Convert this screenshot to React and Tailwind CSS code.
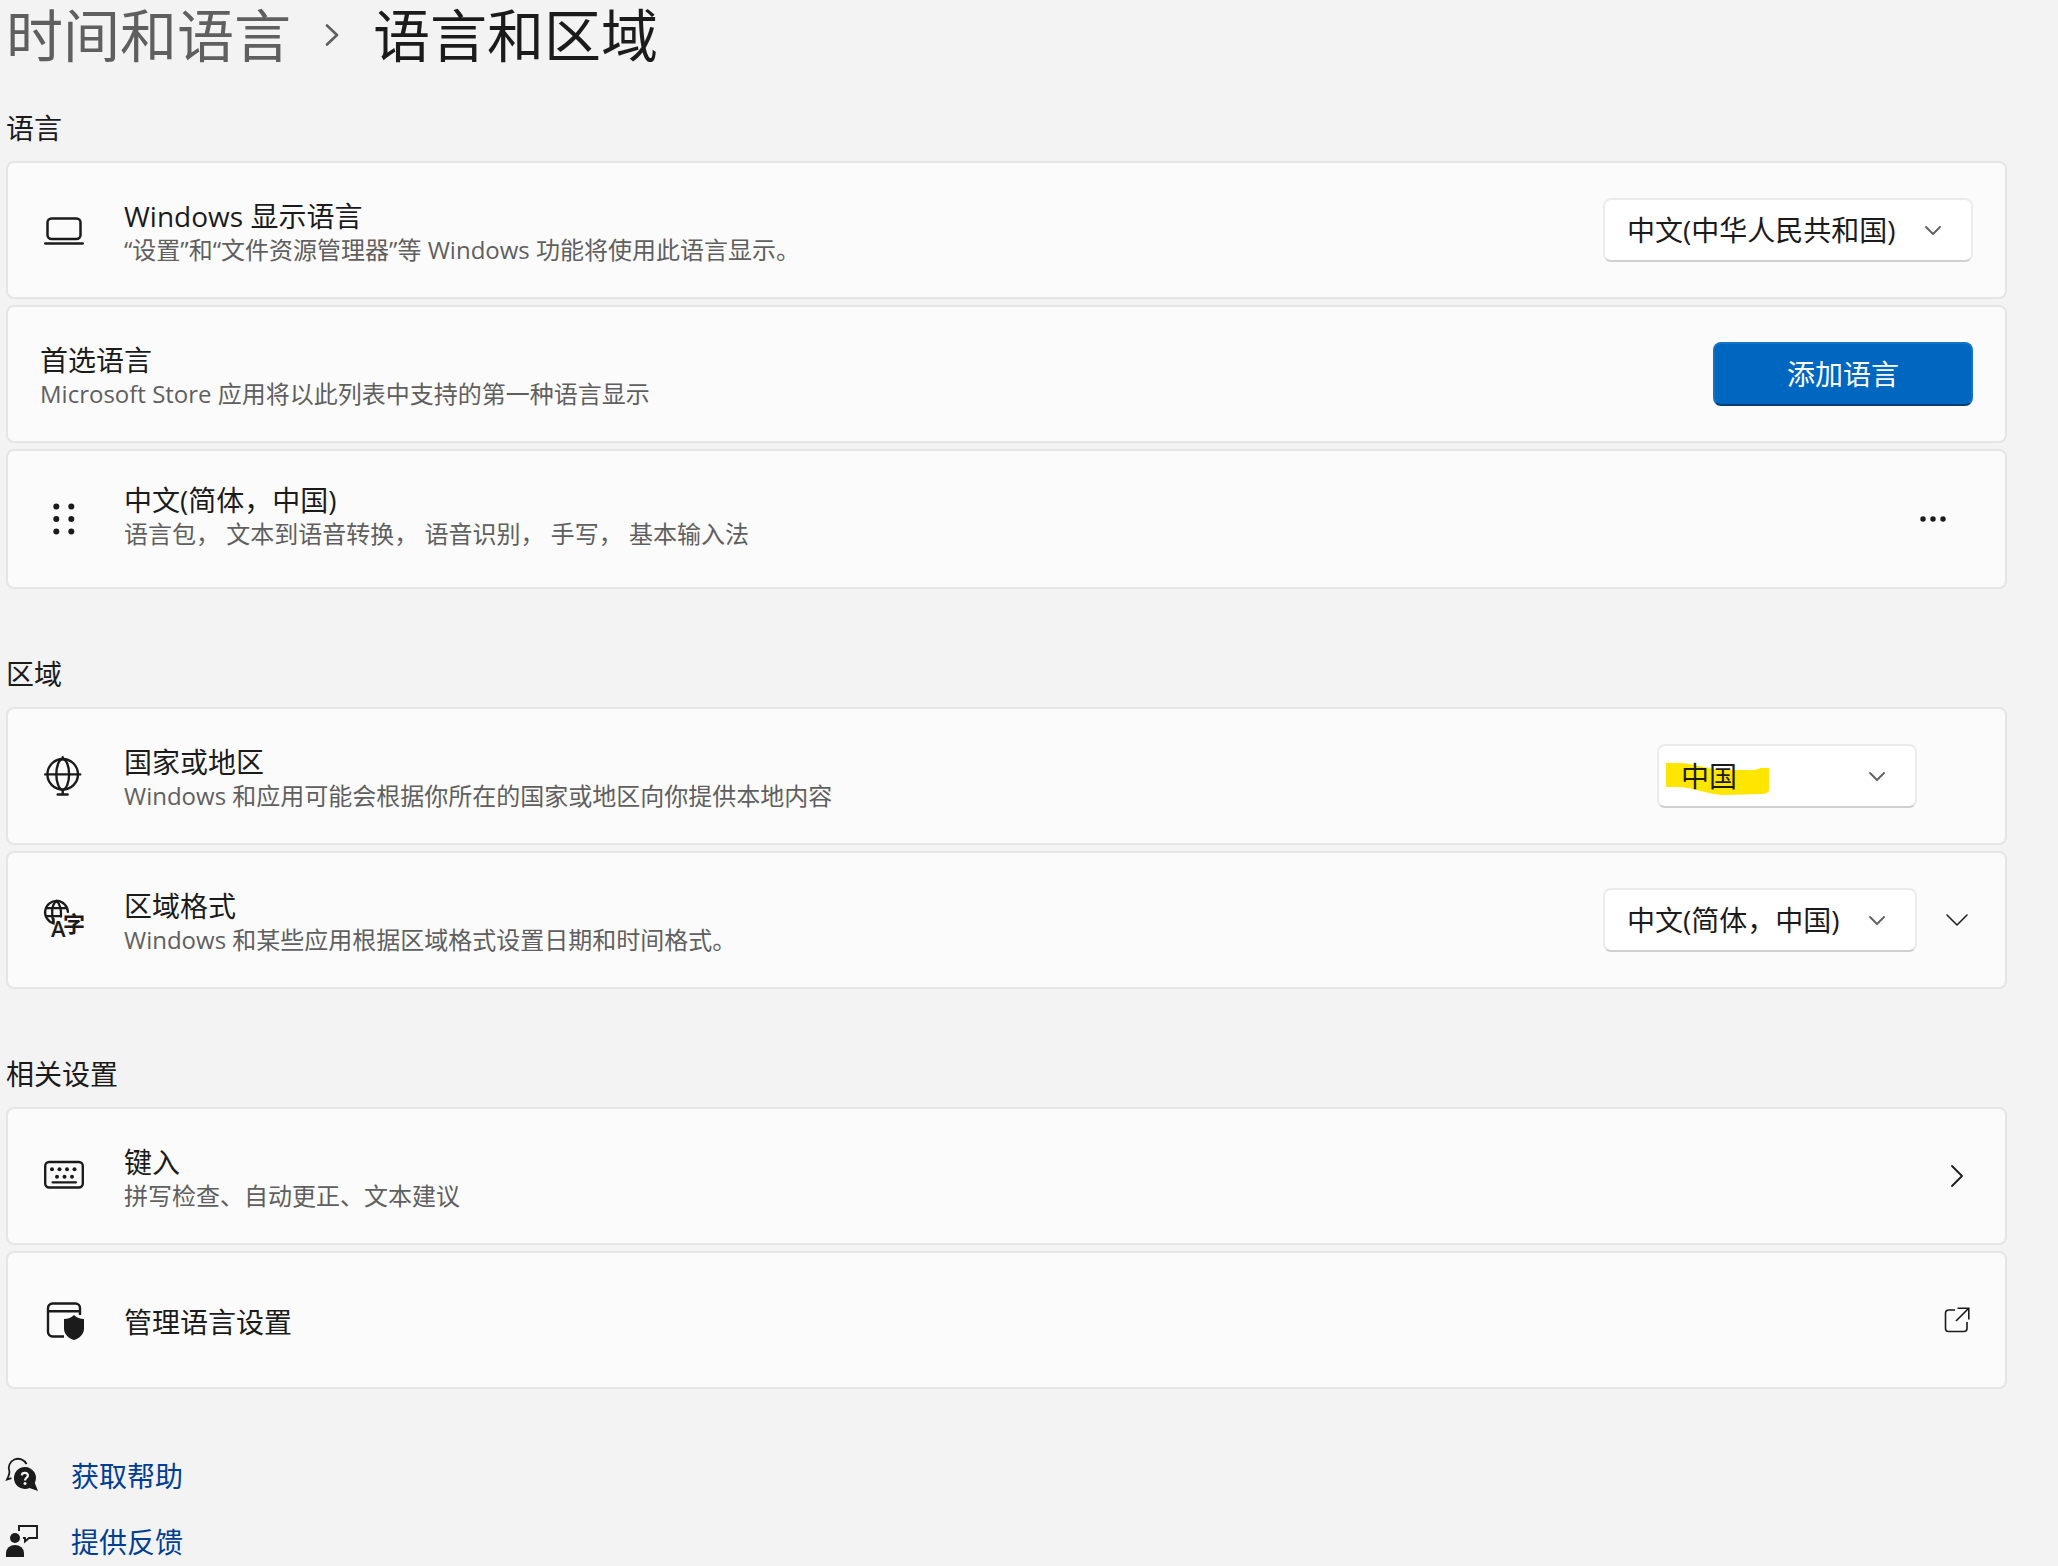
import { useState } from 'react';

function ChevronDown({ className }) {
  return (
    <svg viewBox="0 0 16 9" fill="none" stroke="currentColor" strokeLinecap="round" strokeLinejoin="round" className={className} aria-hidden="true">
      <path d="M1 1l7 7 7-7" strokeWidth="1.8" />
    </svg>
  );
}

function LaptopIcon() {
  return (
    <svg viewBox="0 0 40 40" className="size-10" fill="none" stroke="currentColor" strokeWidth="2.5" strokeLinecap="round" aria-hidden="true">
      <rect x="3.5" y="8.5" width="33" height="20.5" rx="4" />
      <path d="M1.3 33.6h37.4" />
    </svg>
  );
}

function DragIcon() {
  return (
    <svg viewBox="0 0 40 40" className="size-10" fill="currentColor" aria-hidden="true">
      {[7.5, 20, 32.5].map((y) => (
        <g key={y}>
          <circle cx="12.3" cy={y} r="3" />
          <circle cx="27.3" cy={y} r="3" />
        </g>
      ))}
    </svg>
  );
}

function GlobeIcon() {
  return (
    <svg viewBox="0 0 40 40" className="size-10" fill="none" stroke="currentColor" strokeWidth="2.4" strokeLinecap="round" aria-hidden="true">
      <circle cx="18.7" cy="18.3" r="15.3" />
      <ellipse cx="18.7" cy="18.3" rx="6.4" ry="15.3" />
      <path d="M1.2 18.4h35M18.7 1.2v2M18.7 34v4.5M13.7 38.5h10" />
    </svg>
  );
}

function LocaleIcon() {
  return (
    <svg viewBox="0 0 40 40" className="size-10 overflow-visible" aria-hidden="true">
      <g fill="none" stroke="currentColor" strokeWidth="2.3" strokeLinecap="round">
        <path d="M23.9 12A11.4 11.4 0 1 0 9.5 23.3V19" />
        <path d="M12.5 1C7 4.5 7.5 16 9.5 22M12.5 1c3.5 3 5 8 4.5 15.5M2.5 8.2h20M2.5 16.2h14.5" />
      </g>
      <text x="7" y="37" fontSize="22" fontWeight="600" fill="currentColor">A</text>
      <text x="19" y="32" fontSize="22" fontWeight="600" fill="currentColor">字</text>
    </svg>
  );
}

function KeyboardIcon() {
  return (
    <svg viewBox="0 0 40 40" className="size-10" aria-hidden="true">
      <rect x="1.2" y="6" width="37.6" height="25.5" rx="4" fill="none" stroke="currentColor" strokeWidth="2.4" />
      <g fill="currentColor">
        {[8, 15.5, 23, 30.5].map((x) => <circle key={x} cx={x} cy="13.2" r="2" />)}
        {[13, 20.5, 28].map((x) => <circle key={x} cx={x} cy="20.7" r="2" />)}
      </g>
      <path d="M8.5 26.3h23.5" stroke="currentColor" strokeWidth="2.2" strokeLinecap="round" />
    </svg>
  );
}

function WindowShieldIcon() {
  return (
    <svg viewBox="0 0 40 40" className="size-10" aria-hidden="true">
      <path d="M36 15V8a4.5 4.5 0 0 0-4.5-4.5h-23A4.5 4.5 0 0 0 4 8v24a4.5 4.5 0 0 0 4.5 4.5H20M4 11.3h32" fill="none" stroke="currentColor" strokeWidth="2.4" />
      <path d="M30 15c2.5 2.5 6 4 10 4v9.5c0 5.5-4 9.5-10 11.5-6-2-10-6-10-11.5V19c4 0 7.5-1.5 10-4z" fill="currentColor" />
    </svg>
  );
}

function HelpIcon() {
  return (
    <svg viewBox="0 0 32 32" className="size-8 overflow-visible" aria-hidden="true">
      <path d="M20.5 5.2A9.3 9.3 0 0 0 3.4 12.5c.2 2.3-.9 5-2.4 8l4.5-1.3" fill="none" stroke="currentColor" strokeWidth="1.8" />
      <path d="M19 8a11 11 0 0 1 9.8 16L32 32l-8.5-3A11 11 0 1 1 19 8z" fill="currentColor" />
      <path d="M15.8 16.3c.3-3.4 6.4-3.2 6.100.3-.2 2.100-2.900 2.300-2.900 4.900" fill="none" stroke="#f3f3f3" strokeWidth="2.2" />
      <circle cx="19" cy="24.5" r="1.5" fill="#f3f3f3" />
    </svg>
  );
}

function FeedbackIcon() {
  return (
    <svg viewBox="0 0 32 32" className="size-8" fill="currentColor" aria-hidden="true">
      <path d="M13 6V1h18v12h-8l-4 3.5V13h-2" fill="none" stroke="currentColor" strokeWidth="1.9" />
      <circle cx="9" cy="13" r="5" />
      <path d="M0 32v-4a9 8 0 0 1 18 0v4z" />
    </svg>
  );
}

function Card({ icon, title, description, htmlFor, children, tall }) {
  const Title = htmlFor ? 'label' : 'h3';
  return (
    <div className={`flex items-center rounded-lg border-2 border-[#e5e5e5] bg-[#fbfbfb] px-8 ${tall ? 'h-[140px]' : 'h-[138px]'}`}>
      {icon && <div className="mr-9 flex w-12 shrink-0 justify-center">{icon}</div>}
      <div className={`min-w-0 flex-1 ${tall ? 'pb-1.5' : 'pt-1'}`}>
        <Title htmlFor={htmlFor} className="block text-[28px] leading-9">{title}</Title>
        {description && <p className="text-2xl leading-8 text-[#5f5f5f]">{description}</p>}
      </div>
      {children}
    </div>
  );
}

function Select({ id, options, marked }) {
  const [value, setValue] = useState(options[0]);
  return (
    <div className="relative flex h-16 min-w-[260px] rounded-lg bg-white">
      {marked && (
        <svg viewBox="0 0 103 32" className="absolute top-[19px] left-[9px] h-8 w-[103px]" aria-hidden="true">
          <path d="M0 0h15c15 1 25 6 43 7h28c5 0 7-2 10-2h7v23c-1 2-4 3-7 3-12 0-25 1-39 1C40 31 30 25 12 24H0z" fill="#ffe600" />
        </svg>
      )}
      <select
        id={id}
        value={value}
        onChange={(e) => setValue(e.target.value)}
        className="relative w-full appearance-none rounded-lg border-2 border-[#ebebeb] border-b-[#d0d0d0] bg-transparent pr-[75px] pl-[22px] text-[28px]"
      >
        {options.map((option) => (
          <option key={option}>{option}</option>
        ))}
      </select>
      <ChevronDown className="pointer-events-none absolute top-7 right-8 h-[9px] w-4 text-[#5f5f5f]" />
    </div>
  );
}

function Section({ title, children }) {
  return (
    <section>
      <h2 className="mb-[13px] text-[28px] leading-10">{title}</h2>
      <div className="flex flex-col gap-1.5">{children}</div>
    </section>
  );
}

export default function App() {
  return (
    <div lang="zh-CN" className="min-h-screen bg-[#f3f3f3] pr-[51px] pl-1.5 font-['Open_Sans','Noto_Sans_CJK_SC',sans-serif] text-[#1b1b1b]">
      <nav className="flex items-center gap-[34px] text-[57px] leading-[70px]">
        <a href="#time" className="text-[#5f5f5f]">时间和语言</a>
        <svg viewBox="0 0 14 22" className="h-[22px] w-3.5 text-[#5f5f5f]" fill="none" stroke="currentColor" strokeWidth="2.6" strokeLinecap="round" strokeLinejoin="round" aria-hidden="true">
          <path d="M2 1.5l10 9.500L2 20.5" />
        </svg>
        <h1>语言和区域</h1>
      </nav>

      <main className="mt-[38px] flex flex-col gap-[65px]">
        <Section title="语言">
          <Card
            icon={<LaptopIcon />}
            title="Windows 显示语言"
            description="“设置”和“文件资源管理器”等 Windows 功能将使用此语言显示。"
            htmlFor="display-language"
          >
            <Select id="display-language" options={['中文(中华人民共和国)']} />
          </Card>
          <Card title="首选语言" description="Microsoft Store 应用将以此列表中支持的第一种语言显示">
            <button className="h-16 w-[260px] rounded-lg border-2 border-[#1473c5] border-b-[#003e73] bg-[#0067c0] text-[28px] text-white">
              添加语言
            </button>
          </Card>
          <Card
            icon={<DragIcon />}
            title="中文(简体，中国)"
            description="语言包， 文本到语音转换， 语音识别， 手写， 基本输入法"
            tall
          >
            <button aria-label="更多选项" className="flex h-16 w-20 items-center justify-center">
              <svg viewBox="0 0 26 6" className="h-1.5 w-[26px]" fill="currentColor" aria-hidden="true">
                <circle cx="3" cy="3" r="2.7" />
                <circle cx="13" cy="3" r="2.7" />
                <circle cx="23" cy="3" r="2.7" />
              </svg>
            </button>
          </Card>
        </Section>

        <Section title="区域">
          <Card
            icon={<GlobeIcon />}
            title="国家或地区"
            description="Windows 和应用可能会根据你所在的国家或地区向你提供本地内容"
            htmlFor="country"
          >
            <div className="mr-14">
              <Select id="country" options={['中国']} marked />
            </div>
          </Card>
          <Card
            icon={<LocaleIcon />}
            title="区域格式"
            description="Windows 和某些应用根据区域格式设置日期和时间格式。"
            htmlFor="format"
          >
            <Select id="format" options={['中文(简体，中国)']} />
            <button aria-label="展开" className="ml-6 flex h-16 w-8 items-center justify-center">
              <svg viewBox="0 0 22 12" className="h-3 w-[22px]" fill="none" stroke="currentColor" strokeWidth="1.5" strokeLinecap="round" strokeLinejoin="round" aria-hidden="true">
                <path d="M1 1l10 10L21 1" />
              </svg>
            </button>
          </Card>
        </Section>

        <Section title="相关设置">
          <Card icon={<KeyboardIcon />} title="键入" description="拼写检查、自动更正、文本建议">
            <a href="#typing" aria-label="键入" className="flex h-16 w-8 items-center justify-center">
              <svg viewBox="0 0 12 22" className="h-[22px] w-3" fill="none" stroke="currentColor" strokeWidth="1.8" strokeLinecap="round" strokeLinejoin="round" aria-hidden="true">
                <path d="M1 1l10 10L1 21" />
              </svg>
            </a>
          </Card>
          <Card icon={<WindowShieldIcon />} title="管理语言设置">
            <a href="#manage" aria-label="管理语言设置" className="flex h-16 w-8 items-center justify-center">
              <svg viewBox="0 0 26 26" className="size-[26px]" fill="none" stroke="currentColor" strokeWidth="1.6" aria-hidden="true">
                <path d="M11 3H4.5A3 3 0 0 0 1.5 6v15.5a3 3 0 0 0 3 3H20a3 3 0 0 0 3-3V15" />
                <path d="M13.5 1.2h11.3V12.5M24.5 1.5L12 14" />
              </svg>
            </a>
          </Card>
        </Section>

        <footer className="flex flex-col gap-6 text-[28px] leading-10 text-[#003e92]">
          <a href="#help" className="flex items-center gap-[33px]">
            <span className="text-[#1b1b1b]"><HelpIcon /></span>
            <span className="pt-0.5">获取帮助</span>
          </a>
          <a href="#feedback" className="flex items-center gap-[33px]">
            <span className="text-[#1b1b1b]"><FeedbackIcon /></span>
            <span className="pt-0.5">提供反馈</span>
          </a>
        </footer>
      </main>
    </div>
  );
}
